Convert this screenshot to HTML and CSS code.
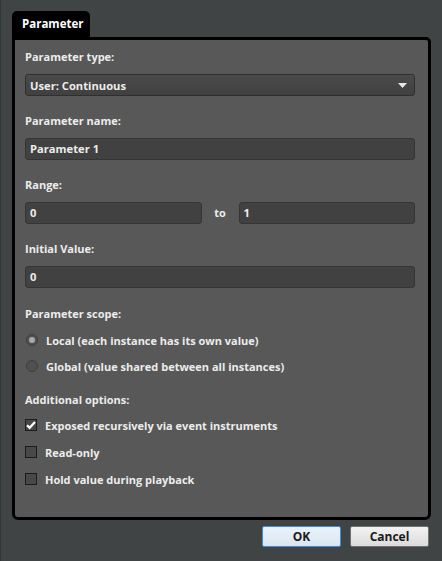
FILE: index.html
```html
<!DOCTYPE html>
<html>
<head>
<meta charset="utf-8">
<link rel="stylesheet" href="styles.css">
</head>
<body>
<div class="dialog">
  <div class="tabbar"><div class="tab">Parameter</div></div>
  <div class="panel">
    <div class="label">Parameter type:</div>
    <div class="select"><span>User: Continuous</span><svg class="arrow" width="9" height="5" viewBox="0 0 9 5"><path d="M0 0H9L4.5 5Z" fill="#e6e6e6"/></svg></div>

    <div class="label">Parameter name:</div>
    <div class="input">Parameter 1</div>

    <div class="label">Range:</div>
    <div class="range">
      <div class="input grow">0</div>
      <span class="to">to</span>
      <div class="input grow">1</div>
    </div>

    <div class="label">Initial Value:</div>
    <div class="input">0</div>

    <div class="label scope">Parameter scope:</div>
    <div class="option"><span class="radio on"></span>Local (each instance has its own value)</div>
    <div class="option"><span class="radio"></span>Global (value shared between all instances)</div>

    <div class="label addl">Additional options:</div>
    <div class="option chk"><span class="box"><svg width="12" height="12" viewBox="0 0 12 12"><path d="M2 6.2L4.6 8.8L10 3" fill="none" stroke="#fff" stroke-width="2.2"/></svg></span>Exposed recursively via event instruments</div>
    <div class="option chk"><span class="box"></span>Read-only</div>
    <div class="option chk"><span class="box"></span>Hold value during playback</div>
  </div>
  <div class="buttons">
    <button class="btn ok">OK</button>
    <button class="btn">Cancel</button>
  </div>
</div>
</body>
</html>
```

FILE: styles.css
```css
* { box-sizing: border-box; }
html, body { margin: 0; padding: 0; }
body {
  width: 442px;
  height: 561px;
  background: #404445;
  font-family: "Open Sans", "DejaVu Sans", sans-serif;
  font-weight: 700;
  font-size: 11px;
  color: #ececec;
  overflow: hidden;
}
.dialog {
  padding: 11px 11px 0 12px;
  height: 561px;
  border-left: 1px solid #333637;
}
.tabbar { display: flex; }
.tab {
  background: #000;
  color: #fff;
  font-size: 11.5px;
  height: 26px;
  padding: 5px 10px 0 10px;
  width: 78px;
  border-radius: 5px 5px 0 0;
  margin-left: -1px;
}
.panel {
  background: #585858;
  border: 3px solid #000;
  border-radius: 0 5px 6px 6px;
  margin-left: -1px;
  height: 483px;
  padding: 9px 13px 0 10px;
}
.label {
  height: 16px;
  line-height: 16px;
  margin-bottom: 9px;
}
.select {
  height: 22px;
  border: 1px solid #2f2f2f;
  border-radius: 3px;
  background: linear-gradient(#4b4b4b, #404040);
  display: flex;
  align-items: center;
  justify-content: space-between;
  padding: 0 7px 0 4px;
  margin-bottom: 17px;
  font-size: 11.2px;
}
.arrow { margin-top: 1px; }
.input {
  height: 22px;
  border: 1px solid #353535;
  border-radius: 3px;
  background: #414141;
  padding: 0 4px;
  line-height: 20px;
  font-size: 11.2px;
  margin-bottom: 17px;
}
.range { display: flex; align-items: flex-start; }
.grow { flex: 1; }
.to { width: 37px; text-align: center; line-height: 22px; }
.scope { margin-top: 18px; margin-bottom: 9px; }
.option {
  display: flex;
  align-items: center;
  height: 18px;
  margin-bottom: 8px;
}
.radio {
  width: 12px; height: 12px;
  border-radius: 50%;
  border: 1px solid #3e3e3e;
  background: #505050;
  margin: 0 8px 0 1px;
  display: flex; align-items: center; justify-content: center;
}
.radio.on::after {
  content: "";
  width: 6px; height: 6px;
  border-radius: 50%;
  background: #a8a8a8;
}
.addl { margin-top: 17px; margin-bottom: 8px; }
.chk { margin-bottom: 9px; }
.box {
  width: 12px; height: 12px;
  border: 1px solid #1c1c1c;
  background: #484848;
  margin-right: 8px;
  display: flex;
}
.box svg { margin: -1px; }
.buttons {
  display: flex;
  justify-content: flex-end;
  gap: 9px;
  padding-top: 6px;
  padding-right: 2px;
}
.btn {
  width: 79px;
  height: 21px;
  border: 1px solid #707070;
  border-radius: 2px;
  background: linear-gradient(#f2f2f2, #dcdcdc);
  font-family: "Open Sans", "DejaVu Sans", sans-serif;
  font-weight: 700;
  font-size: 12px;
  color: #1a1a1a;
  padding: 0;
}
.btn.ok {
  border-color: #3c8fd6;
  background: linear-gradient(#eaf3fb, #d9e6f1);
}
```
